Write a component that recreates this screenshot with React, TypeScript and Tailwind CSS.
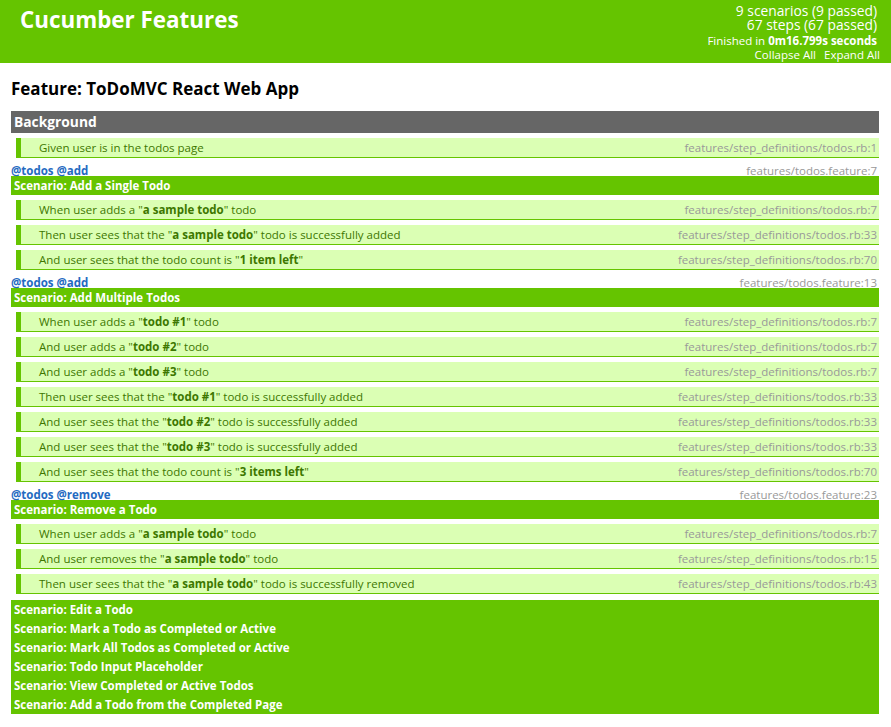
const font = { fontFamily: '"Open Sans", "Liberation Sans", sans-serif' };

type Step = { kw: string; parts: (string | { p: string })[]; file: string };

const stepsFile = "features/step_definitions/todos.rb";

function s(kw: string, file: string, ...parts: (string | { p: string })[]): Step {
  return { kw, parts, file: `${stepsFile}:${file}` };
}

const scenarios: { tags: string; file: string; title: string; steps: Step[] }[] = [
  {
    tags: "@todos @add",
    file: "features/todos.feature:7",
    title: "Add a Single Todo",
    steps: [
      s("When", "7", 'user adds a "', { p: "a sample todo" }, '" todo'),
      s("Then", "33", 'user sees that the "', { p: "a sample todo" }, '" todo is successfully added'),
      s("And", "70", 'user sees that the todo count is "', { p: "1 item left" }, '"'),
    ],
  },
  {
    tags: "@todos @add",
    file: "features/todos.feature:13",
    title: "Add Multiple Todos",
    steps: [
      s("When", "7", 'user adds a "', { p: "todo #1" }, '" todo'),
      s("And", "7", 'user adds a "', { p: "todo #2" }, '" todo'),
      s("And", "7", 'user adds a "', { p: "todo #3" }, '" todo'),
      s("Then", "33", 'user sees that the "', { p: "todo #1" }, '" todo is successfully added'),
      s("And", "33", 'user sees that the "', { p: "todo #2" }, '" todo is successfully added'),
      s("And", "33", 'user sees that the "', { p: "todo #3" }, '" todo is successfully added'),
      s("And", "70", 'user sees that the todo count is "', { p: "3 items left" }, '"'),
    ],
  },
  {
    tags: "@todos @remove",
    file: "features/todos.feature:23",
    title: "Remove a Todo",
    steps: [
      s("When", "7", 'user adds a "', { p: "a sample todo" }, '" todo'),
      s("And", "15", 'user removes the "', { p: "a sample todo" }, '" todo'),
      s("Then", "43", 'user sees that the "', { p: "a sample todo" }, '" todo is successfully removed'),
    ],
  },
];

const collapsed = [
  "Edit a Todo",
  "Mark a Todo as Completed or Active",
  "Mark All Todos as Completed or Active",
  "Todo Input Placeholder",
  "View Completed or Active Todos",
  "Add a Todo from the Completed Page",
];

// passed step row: light green with a thick left bar and thin bottom rule
function StepRow({ step }: { step: Step }) {
  return (
    <li className="mt-[5px] ml-[5px] flex h-[20px] items-center justify-between border-b border-l-[5px] border-[#65c400] bg-[#dbffb4] pl-[18px] pr-[2px] text-[11.5px] leading-[13px] text-[#3d7700]">
      <span className="whitespace-nowrap">
        {step.kw}{" "}
        {step.parts.map((p, i) =>
          typeof p === "string" ? <span key={i}>{p}</span> : <b key={i}>{p.p}</b>
        )}
      </span>
      <span className="whitespace-nowrap text-[#999999]">{step.file}</span>
    </li>
  );
}

export default function App() {
  return (
    <div className="min-h-[727px] bg-white text-black" style={font}>
      <div className="flex h-[63px] items-start justify-between bg-[#65c400] text-white">
        <h1 className="ml-[20px] mt-[5px] text-[22.4px] font-bold leading-[30px]">Cucumber Features</h1>
        <div className="mr-[14px] mt-[4px] text-right">
          <p className="text-[13.8px] leading-[14px]">9 scenarios (9 passed)</p>
          <p className="text-[13.8px] leading-[14px]">67 steps (67 passed)</p>
          <p className="mt-[2px] text-[11.5px] leading-[14px]">
            Finished in <b>0m16.799s seconds</b>
          </p>
          <p className="-mr-[3px] text-[11.5px] leading-[13px]">
            Collapse All<span className="ml-[8px]">Expand All</span>
          </p>
        </div>
      </div>

      <div className="ml-[11px] mr-[12px]">
        <h2 className="pt-[14px] text-[17px] font-bold leading-[24px]">Feature: ToDoMVC React Web App</h2>
        <div className="mt-[10px] flex h-[22px] items-center bg-[#666666] pl-[3px] text-[13.8px] font-bold text-white">
          Background
        </div>
        <ol>
          <StepRow step={{ kw: "Given", parts: ["user is in the todos page"], file: `${stepsFile}:1` }} />
        </ol>

        {scenarios.map((sc) => (
          <div key={sc.title}>
            <div className="mt-[5px] flex h-[13px] items-center justify-between text-[11.5px] leading-[13px]">
              <span className="relative top-[1px] font-bold text-[#246ac1]">{sc.tags}</span>
              <span className="relative top-[1px] pr-[2px] text-[#999999]">{sc.file}</span>
            </div>
            <h3 className="flex h-[19px] items-center bg-[#65c400] pl-[3px] text-[11.5px] font-bold text-white">
              Scenario: {sc.title}
            </h3>
            <ol>
              {sc.steps.map((st, i) => (
                <StepRow key={i} step={st} />
              ))}
            </ol>
          </div>
        ))}

        <div className="mt-[6px] bg-[#65c400]">
          {collapsed.map((t) => (
            <h3 key={t} className="flex h-[19px] items-center pl-[3px] text-[11.5px] font-bold text-white">
              Scenario: {t}
            </h3>
          ))}
        </div>
      </div>
    </div>
  );
}
